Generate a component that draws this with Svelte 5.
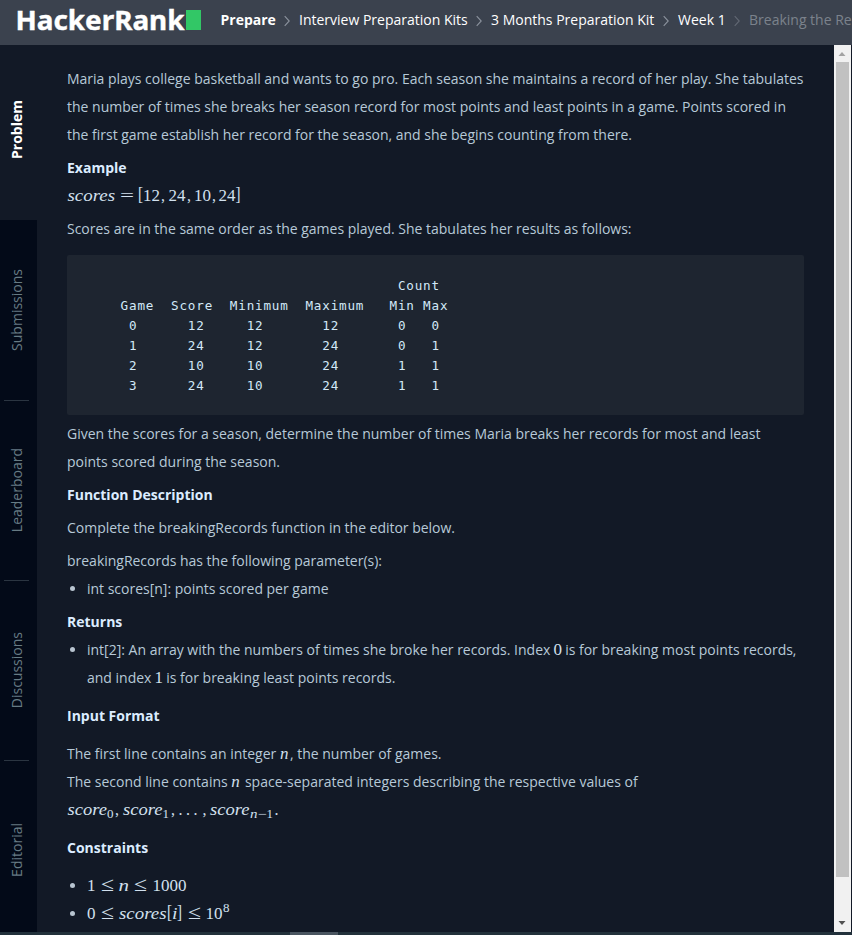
<script>
  const crumbs = [
    { label: 'Prepare', width: 54, kind: 'bold' },
    { label: 'Interview Preparation Kits', width: 168, kind: '' },
    { label: '3 Months Preparation Kit', width: 163, kind: '' },
    { label: 'Week 1', width: 47, kind: '' },
    { label: 'Breaking the Records', width: 140, kind: 'faded' }
  ];
  const tabs = ['Problem', 'Submissions', 'Leaderboard', 'Discussions', 'Editorial'];

  const table = [
    '                                     Count',
    '    Game  Score  Minimum  Maximum   Min Max',
    '     0      12     12       12       0   0',
    '     1      24     12       24       0   1',
    '     2      10     10       24       1   1',
    '     3      24     10       24       1   1'
  ].join('\n');

  // Formula pieces: text, x, width, and optional italic / size / baseline
  const example = [
    { t: 'scores', x: 0.5, w: 47.5, i: true }, { t: '=', x: 53, w: 14, s: 16 },
    { t: '[', x: 71, w: 5, s: 19, y: 18 }, { t: '12', x: 76, w: 17 }, { t: ',', x: 94, w: 4 },
    { t: '24', x: 101.5, w: 17 }, { t: ',', x: 120, w: 4 }, { t: '10', x: 127, w: 17 },
    { t: ',', x: 145, w: 4 }, { t: '24', x: 151.5, w: 17 }, { t: ']', x: 168.5, w: 5, s: 19, y: 18 }
  ];
  const sequence = [
    { t: 'score', x: 0.5, w: 39.5, i: true }, { t: '0', x: 40, w: 6.5, s: 12, y: 22 }, { t: ',', x: 48, w: 4 },
    { t: 'score', x: 56, w: 39.5, i: true }, { t: '1', x: 95.5, w: 6.5, s: 12, y: 22 }, { t: ',', x: 104, w: 4 },
    { t: '.', x: 111.5, w: 4 }, { t: '.', x: 119, w: 4 }, { t: '.', x: 126.5, w: 4 }, { t: ',', x: 135.5, w: 4 },
    { t: 'score', x: 143, w: 39.5, i: true }, { t: 'n', x: 183, w: 7.5, s: 12, y: 22, i: true },
    { t: '−', x: 191, w: 9, s: 12, y: 22 }, { t: '1', x: 199.5, w: 6.5, s: 12, y: 22 }, { t: '.', x: 207.5, w: 4 }
  ];
  const limitN = [
    { t: '1', x: 0, w: 8.5 }, { t: '≤', x: 14, w: 13, s: 20 }, { t: 'n', x: 31.5, w: 10.5, i: true },
    { t: '≤', x: 47, w: 13, s: 20 }, { t: '1000', x: 65.5, w: 34 }
  ];
  const limitScores = [
    { t: '0', x: 0, w: 8.5 }, { t: '≤', x: 14, w: 13, s: 20 }, { t: 'scores', x: 32, w: 47.5, i: true },
    { t: '[', x: 80, w: 5, s: 19, y: 18 }, { t: 'i', x: 85, w: 5.5, i: true }, { t: ']', x: 90, w: 5, s: 19, y: 18 },
    { t: '≤', x: 101, w: 13, s: 20 }, { t: '10', x: 118.5, w: 17 }, { t: '8', x: 136, w: 6.5, s: 12, y: 12 }
  ];
</script>

{#snippet formula(parts)}
  <svg class="formula" width="260" height="28">
    {#each parts as p}
      <text x={p.x} y={p.y ?? 19} font-size={p.s ?? 17} textLength={p.w} lengthAdjust="spacingAndGlyphs" font-style={p.i ? 'italic' : 'normal'}>{p.t}</text>
    {/each}
  </svg>
{/snippet}

{#snippet line(text, width)}
  <svg class="line" {width} height="28"><text x="0" y="19" textLength={width}>{text}</text></svg>
{/snippet}

<div class="page">
  <header>
    <div class="logo">
      <svg width="168" height="40"><text x="-1.5" y="29.5" textLength="169" lengthAdjust="spacingAndGlyphs">HackerRank</text></svg>
      <span class="cursor"></span>
    </div>
    <nav>
      {#each crumbs as c, i}
        {#if i > 0}
          <svg class="chevron {c.kind}" width="24" height="12" viewBox="0 0 24 12"><path d="M9.7 1.2 14.2 6 9.7 10.8" /></svg>
        {/if}
        <span class="crumb {c.kind}" style="width: {c.width}px">{c.label}</span>
      {/each}
    </nav>
  </header>

  <div class="body">
    <aside>
      {#each tabs as tab, i}
        <div class="tab" class:active={i === 0}><span>{tab}</span></div>
      {/each}
    </aside>

    <main>
      <p>
        {@render line('Maria plays college basketball and wants to go pro. Each season she maintains a record of her play. She tabulates', 736.5)}
        {@render line('the number of times she breaks her season record for most points and least points in a game. Points scored in', 719)}
        {@render line('the first game establish her record for the season, and she begins counting from there.', 565)}
      </p>
      <h3>Example</h3>
      <p>{@render formula(example)}</p>
      <p>{@render line('Scores are in the same order as the games played. She tabulates her results as follows:', 564.5)}</p>
      <pre>{table}</pre>
      <p>
        {@render line('Given the scores for a season, determine the number of times Maria breaks her records for most and least', 693.5)}
        {@render line('points scored during the season.', 213)}
      </p>
      <h3>Function Description</h3>
      <p>{@render line('Complete the breakingRecords function in the editor below.', 388)}</p>
      <p class="tight">{@render line('breakingRecords has the following parameter(s):', 315)}</p>
      <ul><li>{@render line('int scores[n]: points scored per game', 241.5)}</li></ul>
      <h3 class="tight">Returns</h3>
      <ul class="returns">
        <li>
          <div>int[2]: An array with the numbers of times she broke her records. Index <b>0</b> is for breaking most points records,</div>
          <div>and index <b>1</b> is for breaking least points records.</div>
        </li>
      </ul>
      <h3 class="section">Input Format</h3>
      <p class="input">
        <span>The first line contains an integer <i>n</i>, the number of games.</span>
        <span>The second line contains <i>n</i> space-separated integers describing the respective values of</span>
        {@render formula(sequence)}
      </p>
      <h3 class="section">Constraints</h3>
      <ul>
        <li>{@render formula(limitN)}</li>
        <li>{@render formula(limitScores)}</li>
      </ul>
    </main>

    <div class="scrollbar">
      <svg width="16" height="17"><path d="M4.5 11h7L8 7z" fill="#a3a3a3" /></svg>
      <div class="thumb"></div>
      <svg class="down" width="16" height="17"><path d="M4.5 6h7L8 10z" fill="#505050" /></svg>
    </div>
  </div>
  <footer><span></span></footer>
</div>

<style>
  :global(body) { margin: 0; background: #121926; }
  .page {
    width: 852px; height: 935px; overflow: hidden; display: flex; flex-direction: column;
    background: #121926; color: #b7c9d8; font: 14px/28px 'Open Sans', sans-serif;
  }
  svg { display: block; flex: none; }
  header { height: 45px; flex: none; display: flex; background: #3b424e; overflow: hidden; }
  .logo { display: flex; padding-left: 17px; width: 204px; box-sizing: border-box; flex: none; }
  .logo svg { overflow: visible; }
  .logo text { fill: #fff; font: 700 26.5px 'Noto Sans', 'Open Sans', sans-serif; stroke: #fff; stroke-width: .4px; }
  .cursor { width: 15px; height: 20px; margin: 10px 0 0 1px; background: #32c766; }
  nav { display: flex; align-items: center; padding-left: 17px; height: 40px; }
  .crumb { flex: none; color: #fff; white-space: nowrap; }
  .crumb.bold { font-weight: 700; margin-left: -.5px; margin-right: .5px; }
  .crumb.faded { color: #7b828c; }
  .chevron { fill: none; stroke: #8b929d; stroke-width: 1.1; margin-top: 1px; }
  .chevron.faded { stroke: #616873; }
  .body { display: flex; flex: 1; min-height: 0; }
  aside { width: 37px; flex: none; background: #030a18; display: flex; flex-direction: column; }
  .tab {
    height: 180px; flex: none; display: flex; align-items: center; justify-content: center;
    color: #677b84; position: relative;
  }
  .tab span { writing-mode: vertical-rl; transform: rotate(180deg); line-height: 20px; margin-right: 3px; }
  .tab.active { height: 175px; background: #121926; color: #fff; font-weight: 700; }
  .tab.active span { margin-top: -6px; }
  .tab:nth-child(n + 3)::before { content: ''; position: absolute; left: 4px; top: 0; width: 25px; height: 1px; background: #2b3541; }
  main { width: 737px; padding: 20px 30px 0; flex: none; white-space: nowrap; }
  p, h3, ul, pre { margin: 0 0 5px; }
  h3 { font-size: 14px; line-height: 28px; font-weight: 700; color: #dcecff; }
  h3:first-of-type { margin-bottom: 0; }
  .line text { fill: #b7c9d8; font: 14px 'Open Sans', sans-serif; }
  .line { overflow: visible; }
  .formula text { fill: #d2e0ee; font-family: 'Liberation Serif', serif; }
  pre {
    margin: 12px 0 5px; padding: 21px 20px 19px; height: 120px; background: #1e2530; border-radius: 2px;
    color: #d3e9f8; font: 12.6px/20px 'DejaVu Sans Mono', monospace; letter-spacing: .82px;
  }
  p.tight, h3.tight { margin-bottom: 0; }
  ul { list-style: none; padding: 0 0 0 20px; }
  li { position: relative; }
  li::before { content: ''; position: absolute; left: -17px; top: 11px; width: 5px; height: 5px; border-radius: 50%; background: #b8c4d0; }
  ul.returns { margin-bottom: 10px; }
  h3.section { margin-bottom: 10px; }
  p.input { margin-bottom: 10px; }
  .input span { display: block; }
  b, i { font: 17px/20px 'Liberation Serif', serif; color: #d2e0ee; }
  b { margin: 0 -.5px; }
  i { font-style: italic; display: inline-block; width: 10px; }
  footer { height: 3px; flex: none; background: #22313b; }
  footer span { display: block; width: 48px; height: 3px; margin-left: 290px; background: #4a5560; }
  .scrollbar { width: 17px; flex: none; background: #f1f1f1; display: flex; flex-direction: column; }
  .thumb { width: 13px; height: 815px; margin-left: 2px; background: #c1c1c1; }
  .down { margin-top: auto; }
</style>
